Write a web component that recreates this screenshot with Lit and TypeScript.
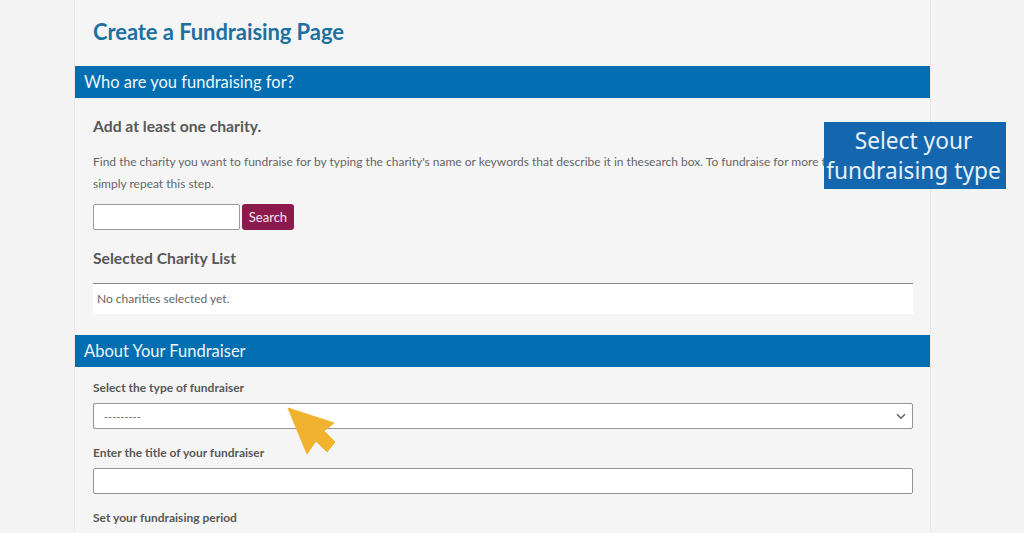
import { LitElement, html, css } from "lit";
import { customElement } from "lit/decorators.js";

@customElement("app-root")
export class AppRoot extends LitElement {
  static styles = css`
    :host { display: block; position: relative; width: 1024px; height: 533px; overflow: hidden; background: #f4f4f5; font-family: Lato, "Liberation Sans", sans-serif; color: #555; }
    .page { box-sizing: border-box; width: 857px; height: 533px; margin-left: 74px; border-left: 1px solid #e8e8e9; border-right: 1px solid #e8e8e9; background: #f5f5f6; overflow: hidden; }
    h1 { margin: 0; padding: 18px 0 0 18px; height: 66px; box-sizing: border-box; font-size: 22px; line-height: 28px; font-weight: 700; color: #20709f; letter-spacing: -0.08px; }
    .bar { background: #006eb0; color: #eef6fb; height: 32px; margin-right: -1px; margin-left: -1px; padding-left: 10px; font-size: 16.5px; line-height: 32px; }
    .body { padding: 0 17px 0 18px; }
    h2 { margin: 0; font-size: 15.7px; font-weight: 700; line-height: 20px; color: #585858; }
    .first { padding-top: 18px; }
    p { margin: 15px 0 0; font-size: 12px; line-height: 22px; color: #666; white-space: nowrap; }
    .search { display: flex; gap: 2px; margin-top: 9px; }
    .search .input { box-sizing: border-box; width: 147px; height: 26px; background: #fff; border: 1px solid #9a9a9a; border-radius: 2px; }
    .btn { width: 52px; height: 26px; border-radius: 3px; background: #8c1a4c; color: #f3e6ec; font-size: 13px; line-height: 26px; text-align: center; }
    .list-title { margin-top: 18px; }
    .list { box-sizing: border-box; height: 31px; margin-top: 15px; border-top: 1px solid #8a8a8a; background: #fff; padding-left: 4px; font-size: 12px; line-height: 29px; color: #666; }
    .second { margin-top: 21px; }
    label { display: block; font-size: 12px; font-weight: 700; line-height: 16px; color: #585858; }
    .l1 { margin-top: 13px; }
    .l2, .l3 { margin-top: 16px; }
    .field { box-sizing: border-box; height: 26px; margin-top: 7px; background: #fff; border: 1px solid #949494; border-radius: 2px; display: flex; align-items: center; justify-content: space-between; padding: 0 6px 0 10px; font-size: 11px; color: #666; }
    .field svg { display: block; }
    .callout { position: absolute; left: 824px; top: 122px; width: 182px; height: 67px; background: #1466ae; color: #e6f1fa; font-family: "Noto Sans", sans-serif; font-size: 22.7px; line-height: 29.5px; text-align: center; padding: 4px 3px 0 0; box-sizing: border-box; white-space: nowrap; }
    .cursor { position: absolute; left: 285px; top: 405px; }
  `;

  render() {
    return html`
      <div class="page">
        <h1>Create a Fundraising Page</h1>
        <div class="bar">Who are you fundraising for?</div>
        <div class="body">
          <h2 class="first">Add at least one charity.</h2>
          <p>Find the charity you want to fundraise for by typing the charity's name or keywords that describe it in thesearch box. To fundraise for more than one charity,<br />simply repeat this step.</p>
          <div class="search"><div class="input"></div><div class="btn">Search</div></div>
          <h2 class="list-title">Selected Charity List</h2>
          <div class="list">No charities selected yet.</div>
        </div>
        <div class="bar second">About Your Fundraiser</div>
        <div class="body">
          <label class="l1">Select the type of fundraiser</label>
          <div class="field">
            <span>---------</span>
            <svg width="10" height="7" viewBox="0 0 10 7"><path d="M1 1.2 5 5.2l4-4" fill="none" stroke="#666" stroke-width="1.6"/></svg>
          </div>
          <label class="l2">Enter the title of your fundraiser</label>
          <div class="field"></div>
          <label class="l3">Set your fundraising period</label>
        </div>
      </div>
      <div class="callout">Select your<br />fundraising type</div>
      <svg class="cursor" width="54" height="52" viewBox="285 405 54 52">
        <path d="M288 408 334 423 324 431 335 442 327 452 316 441 307 454Z" fill="#f1b32f" stroke="#f1b32f" stroke-width="1" stroke-linejoin="round"/>
      </svg>
    `;
  }
}
